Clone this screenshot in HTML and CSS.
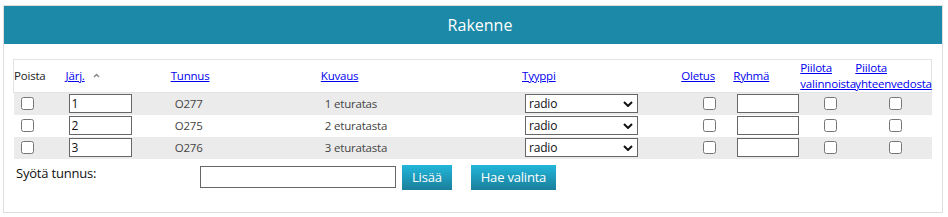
FILE: index.html
```html
<!DOCTYPE html>
<html lang="fi">
<head>
    <meta charset="UTF-8">
    <title>Rakenne</title>
    <link rel="stylesheet" href="styles.css">
</head>
<body>

    <div class="panel">
        <div class="panel-header">Rakenne</div>

        <div class="panel-body">
            <table class="structure">
                <colgroup>
                    <col style="width: 52px">
                    <col style="width: 105px">
                    <col style="width: 150px">
                    <col style="width: 201px">
                    <col style="width: 159px">
                    <col style="width: 52px">
                    <col style="width: 67px">
                    <col style="width: 55px">
                    <col style="width: 76px">
                </colgroup>
                <thead>
                    <tr>
                        <th>Poista</th>
                        <th><a href="#">Järj.</a>
                            <svg class="sort-caret" width="7" height="5" viewBox="0 0 7 5"><path d="M1 4 L3.5 1.5 L6 4" fill="none" stroke="#888" stroke-width="1.5"/></svg>
                        </th>
                        <th><a href="#">Tunnus</a></th>
                        <th><a href="#">Kuvaus</a></th>
                        <th><a href="#">Tyyppi</a></th>
                        <th><a href="#">Oletus</a></th>
                        <th><a href="#">Ryhmä</a></th>
                        <th class="wrap"><a href="#">Piilota valinnoista</a></th>
                        <th class="wrap"><a href="#">Piilota yhteenvedosta</a></th>
                    </tr>
                </thead>
                <tbody>
                    <tr>
                        <td class="cb-poista"><input type="checkbox"></td>
                        <td class="pad"><input type="text" class="order" value="1"></td>
                        <td class="txt">O277</td>
                        <td class="txt">1 eturatas</td>
                        <td class="pad"><span class="select-wrap"><select><option>radio</option></select><svg class="chevron" width="10" height="6" viewBox="0 0 10 6"><path d="M1 1 L5 5 L9 1" fill="none" stroke="#111" stroke-width="2"/></svg></span></td>
                        <td class="cb-oletus"><input type="checkbox"></td>
                        <td class="pad-r"><input type="text" class="group"></td>
                        <td class="cb-val"><input type="checkbox"></td>
                        <td class="cb-yht"><input type="checkbox"></td>
                    </tr>
                    <tr>
                        <td class="cb-poista"><input type="checkbox"></td>
                        <td class="pad"><input type="text" class="order" value="2"></td>
                        <td class="txt">O275</td>
                        <td class="txt">2 eturatasta</td>
                        <td class="pad"><span class="select-wrap"><select><option>radio</option></select><svg class="chevron" width="10" height="6" viewBox="0 0 10 6"><path d="M1 1 L5 5 L9 1" fill="none" stroke="#111" stroke-width="2"/></svg></span></td>
                        <td class="cb-oletus"><input type="checkbox"></td>
                        <td class="pad-r"><input type="text" class="group"></td>
                        <td class="cb-val"><input type="checkbox"></td>
                        <td class="cb-yht"><input type="checkbox"></td>
                    </tr>
                    <tr>
                        <td class="cb-poista"><input type="checkbox"></td>
                        <td class="pad"><input type="text" class="order" value="3"></td>
                        <td class="txt">O276</td>
                        <td class="txt">3 eturatasta</td>
                        <td class="pad"><span class="select-wrap"><select><option>radio</option></select><svg class="chevron" width="10" height="6" viewBox="0 0 10 6"><path d="M1 1 L5 5 L9 1" fill="none" stroke="#111" stroke-width="2"/></svg></span></td>
                        <td class="cb-oletus"><input type="checkbox"></td>
                        <td class="pad-r"><input type="text" class="group"></td>
                        <td class="cb-val"><input type="checkbox"></td>
                        <td class="cb-yht"><input type="checkbox"></td>
                    </tr>
                </tbody>
            </table>

            <div class="add-row">
                <label for="codeInput">Syötä tunnus:</label>
                <input type="text" id="codeInput" class="code-input">
                <button class="btn">Lisää</button>
                <button class="btn btn-gap">Hae valinta</button>
            </div>
        </div>
    </div>

</body>
</html>
```

FILE: styles.css
```css
/* --- Basic Setup --- */
body {
    margin: 0;
    font-family: "Open Sans", "Noto Sans", sans-serif;
    font-size: 11.5px;
    letter-spacing: -0.2px;
    color: #333;
    background: #fff;
}

/* --- Panel --- */
.panel {
    margin: 5px 5px 0 3px;
    height: 208px;
    border: 1px solid #dedede;
    box-sizing: border-box;
}

.panel-header {
    height: 38px;
    padding-left: 14px;
    background-color: #1b89a7;
    color: #fff;
    font-size: 16px;
    letter-spacing: 0;
    line-height: 38px;
    text-align: center;
}

.panel-body {
    padding: 15px 9px 0 9px;
}

/* --- Table --- */
.structure {
    width: 919px;
    border-collapse: collapse;
    table-layout: fixed;
}

.structure thead tr {
    border: 1px solid #e3e3e3;
    height: 33px;
}

.structure th {
    text-align: left;
    font-weight: normal;
    padding: 0;
    color: #222;
    white-space: nowrap;
    line-height: 16px;
}

.structure th.wrap {
    white-space: normal;
    vertical-align: middle;
}

.structure th.wrap a {
    display: inline-block;
    width: 40px;
}

.structure a {
    color: #0000ee;
}

.sort-caret {
    margin-left: 6px;
    vertical-align: 2px;
}

.structure tbody tr {
    height: 22px;
}

.structure tbody tr:nth-child(odd) {
    background-color: #ebebeb;
}

.structure td {
    padding: 0;
    vertical-align: middle;
}

.structure td.txt {
    padding-left: 4px;
    color: #444;
}

.structure td.pad {
    padding-left: 3px;
}

.structure td.pad-r {
    padding-left: 4px;
}

/* --- Form controls --- */
input[type="checkbox"] {
    width: 13px;
    height: 13px;
    margin: 0;
    display: block;
}

.cb-poista input { margin-left: 7px; }
.cb-oletus input { margin-left: 22px; }
.cb-val input { margin-left: 24px; }
.cb-yht input { margin-left: 34px; }

input[type="text"] {
    font-family: "Open Sans", "Noto Sans", sans-serif;
    font-size: 12px;
    letter-spacing: -0.2px;
    border: 1px solid #666;
    box-sizing: border-box;
    padding: 0 2px;
    display: block;
    color: #111;
}

.order {
    width: 63px;
    height: 19px;
}

.group {
    width: 62px;
    height: 19px;
}

.select-wrap {
    position: relative;
    display: block;
    width: 113px;
}

select {
    appearance: none;
    -webkit-appearance: none;
    display: block;
    width: 113px;
    height: 19px;
    border: 1px solid #666;
    border-radius: 0;
    background: #fff;
    font-family: "Open Sans", "Noto Sans", sans-serif;
    font-size: 12px;
    letter-spacing: -0.2px;
    padding: 0 3px;
    color: #111;
}

.chevron {
    position: absolute;
    right: 5px;
    top: 7px;
    pointer-events: none;
}

/* --- Add row --- */
.add-row {
    display: flex;
    align-items: flex-start;
    margin-top: 6px;
    padding-left: 3px;
}

.add-row label {
    width: 184px;
    font-size: 13px;
    color: #111;
    line-height: 16px;
}

.code-input {
    width: 196px;
    height: 22px;
    margin-top: 1px;
}

.btn {
    margin-left: 6px;
    height: 25px;
    padding: 0 10px;
    border: none;
    color: #fff;
    font-family: "Open Sans", "Noto Sans", sans-serif;
    font-size: 13px;
    letter-spacing: -0.2px;
    background: linear-gradient(to bottom, #22b6da, #1a7f9b);
    cursor: pointer;
}

.btn-gap {
    margin-left: 19px;
}
```
